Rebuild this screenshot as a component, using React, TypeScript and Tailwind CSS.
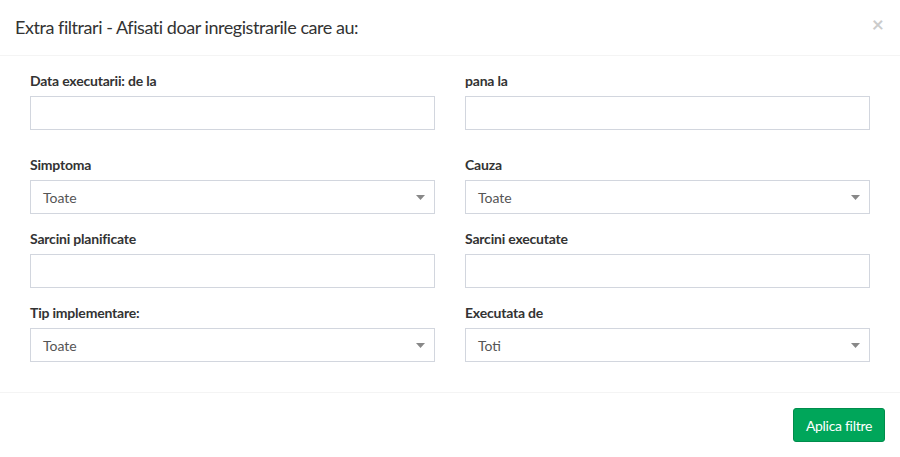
import React from 'react';

const font = { fontFamily: 'Lato, "Noto Sans", "Liberation Sans", sans-serif' };

function Field({ label, value }: { label: string; value?: string }) {
  return (
    <div className="px-[15px] mb-[15px]">
      <label className="block font-bold text-[14px] leading-[20px] mb-[5px] text-[#333] tracking-[-0.2px]">{label}</label>
      {value === undefined ? (
        <div className="h-[34px] border border-[#d2d6de] bg-white" />
      ) : (
        <div className="h-[34px] border border-[#d2d6de] bg-white flex items-center justify-between pl-[12px] pr-[9px] text-[14px] text-[#555]">
          <span>{value}</span>
          <svg width="9" height="5" viewBox="0 0 9 5">
            <path d="M0 0 L9 0 L4.5 5 Z" fill="#888" />
          </svg>
        </div>
      )}
    </div>
  );
}

export default function App() {
  return (
    <div className="w-[900px] h-[457px] bg-white text-[#333]" style={font}>
      {/* Header */}
      <div className="h-[56px] border-b border-[#f4f4f4] px-[15px] flex items-center justify-between">
        <h4 className="text-[18px] leading-[25px] text-[#333] tracking-[-0.45px]">Extra filtrari - Afisati doar inregistrarile care au:</h4>
        <span className="text-[21px] font-bold leading-none text-black opacity-20 -mt-[8px] mr-[1px]">×</span>
      </div>

      {/* Body */}
      <div className="p-[15px] h-[336px]">
        <div className="grid grid-cols-2 mb-[10px]">
          <Field label="Data executarii: de la" />
          <Field label="pana la" />
        </div>
        <div className="grid grid-cols-2">
          <Field label="Simptoma" value="Toate" />
          <Field label="Cauza" value="Toate" />
          <Field label="Sarcini planificate" />
          <Field label="Sarcini executate" />
          <Field label="Tip implementare:" value="Toate" />
          <Field label="Executata de" value="Toti" />
        </div>
      </div>

      {/* Footer */}
      <div className="border-t border-[#f4f4f4] p-[15px] flex justify-end">
        <button className="h-[34px] px-[12px] rounded-[3px] bg-[#00a65a] border border-[#008d4c] text-white text-[14px] tracking-[-0.3px]">
          Aplica filtre
        </button>
      </div>
    </div>
  );
}
